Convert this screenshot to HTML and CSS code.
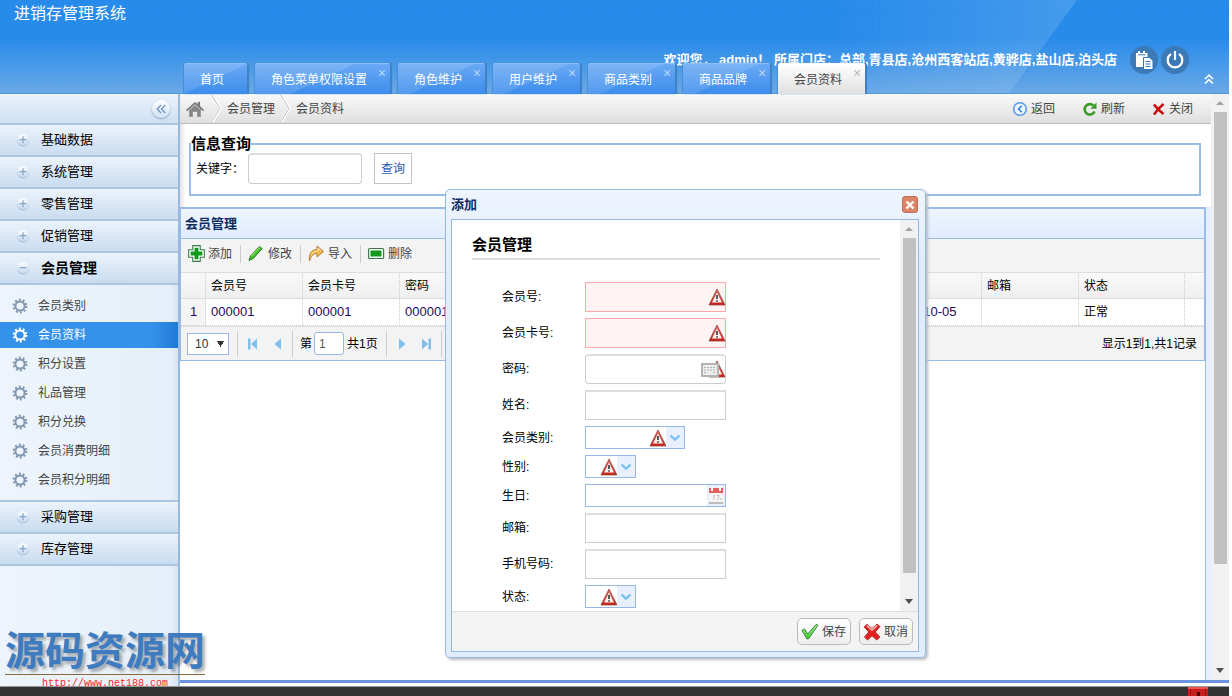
FILE: index.html
```html
<!DOCTYPE html>
<html lang="zh-CN">
<head>
<meta charset="utf-8">
<title>进销存管理系统</title>
<link rel="stylesheet" href="styles.css">
</head>
<body>
<svg class="defs" width="0" height="0">
  <defs>
    <linearGradient id="red" x1="0" x2="0" y1="0" y2="1"><stop offset="0" stop-color="#e8706a"/><stop offset="1" stop-color="#cc1c14"/></linearGradient>
    <linearGradient id="green" x1="0" x2="0" y1="0" y2="1"><stop offset="0" stop-color="#b5f08a"/><stop offset="1" stop-color="#3fc52a"/></linearGradient>
    <linearGradient id="ball" x1="0" x2="0" y1="0" y2="1"><stop offset="0" stop-color="#ffffff"/><stop offset="1" stop-color="#c3d7ee"/></linearGradient>
    <linearGradient id="shine" x1="0" x2="1" y1="0" y2="0"><stop offset="0" stop-color="#fff" stop-opacity="0"/><stop offset="1" stop-color="#fff" stop-opacity=".14"/></linearGradient>
    <symbol id="gear" viewBox="0 0 16 16">
      <circle cx="8" cy="8" r="4.600" fill="none" stroke="currentColor" stroke-width="2"/>
      <circle cx="8" cy="8" r="6.200" fill="none" stroke="currentColor" stroke-width="2.400" stroke-dasharray="1.900 1.996"/>
    </symbol>
    <symbol id="plus" viewBox="0 0 14 14">
      <circle cx="7" cy="7.500" r="6" fill="#a9c2dd"/><circle cx="7" cy="6.700" r="5.800" fill="url(#ball)"/>
      <path d="M7 3.200v7M3.500 6.700h7" stroke="#7fa3c9" stroke-width="1.200"/>
    </symbol>
    <symbol id="minus" viewBox="0 0 14 14">
      <circle cx="7" cy="7.500" r="6" fill="#a9c2dd"/><circle cx="7" cy="6.700" r="5.800" fill="url(#ball)"/>
      <path d="M3.500 6.700h7" stroke="#7fa3c9" stroke-width="1.200"/>
    </symbol>
    <symbol id="warn" viewBox="0 0 18 18">
      <path d="M9 1 17 17H1z" fill="url(#red)" stroke="#8a4a44" stroke-width=".8" stroke-linejoin="round"/>
      <path d="M9 4.500 14 14.600H4z" fill="#f8f2f1"/>
      <path d="M9 7v4M9 12.200v1.600" stroke="#333" stroke-width="1.600"/>
    </symbol>
    <symbol id="down" viewBox="0 0 12 8"><path d="M1.500 1.500 6 5.600l4.500-4.100" fill="none" stroke="#77c0f3" stroke-width="2.300"/></symbol>
    <symbol id="crumb" viewBox="0 0 11 27"><path d="M1 0 9.500 13.500 1 27" fill="none" stroke="#fff" stroke-width="3"/><path d="M.5 0 9 13.500.5 27" fill="none" stroke="#bdbdbd" stroke-width="1"/></symbol>
  </defs>
</svg>

<header class="banner">
  <svg class="shine" viewBox="0 0 240 94" preserveAspectRatio="none"><path d="M0 0H240L172 94H0z" fill="url(#shine)"/></svg>
  <h1 class="brand">进销存管理系统</h1>
  <div class="account">
    <span class="welcome">欢迎您， admin！ 所属门店：总部,青县店,沧州西客站店,黄骅店,盐山店,泊头店</span>
    <button class="round" aria-label="记事"><svg width="20" height="20" viewBox="0 0 20 20"><path d="M2 3h2V1h2v2h3V1h2v2h2.500v4H10v10H2z" fill="#fff"/><path d="M4 4.800h7.500" stroke="#3676b8"/><path d="M9.500 7.500h6l3.500 3v9H9.500z" fill="#fff" stroke="#3676b8"/><path d="M11.500 11.500h5M11.500 14h5M11.500 16.500h5" stroke="#3676b8" stroke-width="1.200"/></svg></button>
    <button class="round" aria-label="退出"><svg width="20" height="20" viewBox="0 0 20 20"><path d="M6 4A7.300 7.300 0 1 0 14 4M10 1v9" fill="none" stroke="#fff" stroke-width="2.200"/></svg></button>
  </div>
  <nav class="tabs">
    <a class="tab" href="#">首页</a>
    <a class="tab" href="#">角色菜单权限设置<i class="tab-x">×</i></a>
    <a class="tab" href="#">角色维护<i class="tab-x">×</i></a>
    <a class="tab" href="#">用户维护<i class="tab-x">×</i></a>
    <a class="tab" href="#">商品类别<i class="tab-x">×</i></a>
    <a class="tab" href="#">商品品牌<i class="tab-x">×</i></a>
    <a class="tab current" href="#">会员资料<i class="tab-x">×</i></a>
  </nav>
  <button class="collapse-top" aria-label="收起"><svg width="10" height="10" viewBox="0 0 10 10"><path d="M1 5 5 1.200 9 5M1 9.500 5 5.700 9 9.500" fill="none" stroke="#fff" stroke-width="1.600"/></svg></button>
</header>

<div class="main">
  <aside class="sidebar">
    <div class="side-top"><button class="fold" aria-label="折叠"><svg width="10" height="10" viewBox="0 0 10 10"><path d="M5 1 1.200 5 5 9M9.300 1 5.500 5 9.300 9" fill="none" stroke="#6f96c2" stroke-width="1.300"/></svg></button></div>
    <a class="group" href="#"><svg width="14" height="14"><use href="#plus"/></svg>基础数据</a>
    <a class="group" href="#"><svg width="14" height="14"><use href="#plus"/></svg>系统管理</a>
    <a class="group" href="#"><svg width="14" height="14"><use href="#plus"/></svg>零售管理</a>
    <a class="group" href="#"><svg width="14" height="14"><use href="#plus"/></svg>促销管理</a>
    <a class="group open" href="#"><svg width="14" height="14"><use href="#minus"/></svg>会员管理</a>
    <nav class="submenu">
      <a class="item" href="#"><svg width="16" height="16"><use href="#gear"/></svg>会员类别</a>
      <a class="item selected" href="#"><svg width="16" height="16"><use href="#gear"/></svg>会员资料</a>
      <a class="item" href="#"><svg width="16" height="16"><use href="#gear"/></svg>积分设置</a>
      <a class="item" href="#"><svg width="16" height="16"><use href="#gear"/></svg>礼品管理</a>
      <a class="item" href="#"><svg width="16" height="16"><use href="#gear"/></svg>积分兑换</a>
      <a class="item" href="#"><svg width="16" height="16"><use href="#gear"/></svg>会员消费明细</a>
      <a class="item" href="#"><svg width="16" height="16"><use href="#gear"/></svg>会员积分明细</a>
    </nav>
    <a class="group" href="#"><svg width="14" height="14"><use href="#plus"/></svg>采购管理</a>
    <a class="group" href="#"><svg width="14" height="14"><use href="#plus"/></svg>库存管理</a>
  </aside>

  <div class="frame">
    <div class="viewport">
      <main class="page">
        <div class="crumbs">
          <svg class="home" width="18" height="18" viewBox="0 0 18 18"><path d="M3 9.500 9 5l6 4.500V17h-4v-5H7v5H3z" fill="#9a9a9a"/><path d="M0 10 9 2l2.500 2.200V2.500L14 1.500V6l4 4-1 1.200-8-7-8 7z" fill="#777"/><path d="M9 6v5M7 8v3M11 8v3M5 10v6M13 10v6" stroke="#666" stroke-width=".8"/></svg>
          <svg width="11" height="27"><use href="#crumb"/></svg>
          <a href="#">会员管理</a>
          <svg width="11" height="27"><use href="#crumb"/></svg>
          <a href="#">会员资料</a>
          <div class="page-tools">
            <button><svg width="16" height="16" viewBox="0 0 16 16"><circle cx="8" cy="8" r="6.300" fill="#eef5fd" stroke="#5b9bea" stroke-width="1.600"/><path d="M9.700 4.800 6.500 8l3.200 3.200" fill="none" stroke="#3f88e4" stroke-width="1.700"/></svg>返回</button>
            <button><svg width="16" height="16" viewBox="0 0 16 16"><path d="M12.600 10.500A5.200 5.200 0 1 1 11.500 4.600" fill="none" stroke="#3a9b25" stroke-width="2.600"/><path d="M14.500 1.500v6.300H8.300z" fill="#3a9b25"/></svg>刷新</button>
            <button><svg width="14" height="14" viewBox="0 0 14 14"><path d="M2 2.500c2 2.500 5 6.500 9.500 9.500M11.500 2C8 5 4.500 8.500 2 12.500" fill="none" stroke="#c80d0d" stroke-width="2.500"/></svg>关闭</button>
          </div>
        </div>

        <div class="query-zone">
          <fieldset class="query">
            <legend>信息查询</legend>
            <label for="kw">关键字：</label>
            <input id="kw" class="box kw" type="text">
            <button class="search">查询</button>
          </fieldset>
        </div>

        <div class="grid-zone">
          <section class="panel">
            <h2 class="panel-title">会员管理</h2>
            <div class="toolbar">
              <button><svg width="17" height="17" viewBox="0 0 16 16"><path d="M4.500.6h7v3.900h3.900v7h-3.900v3.900h-7v-3.900H.6v-7h3.900z" fill="#fff" stroke="#3a7a46" stroke-width="1"/><path d="M8 2.500v11M2.500 8h11" stroke="#109a1c" stroke-width="3.600"/></svg>添加</button>
              <button><svg width="17" height="17" viewBox="0 0 17 17"><path d="M1 15.500 2.500 11 11.500 1.500l2.600 2L5.500 13.300z" fill="#45c02d" stroke="#2a7a1d"/><path d="M3.500 11 12 2.300" stroke="#a9f08e"/></svg>修改</button>
              <button><svg width="17" height="17" viewBox="0 0 17 17"><path d="M1.500 16C.5 9 3.500 4.500 9 4.500V1l6.500 5.500L9 12V8.500C5.500 8.500 3 11 1.500 16z" fill="#f8b94c" stroke="#b97d3d"/><path d="M3 9.500Q5.500 5.500 10 5.600V3.200l3.200 3" fill="none" stroke="#ffe8aa"/></svg>导入</button>
              <button><svg width="17" height="17" viewBox="0 0 17 17"><rect x=".6" y="3.500" width="15" height="10" rx="1" fill="#fff" stroke="#3a7a46" stroke-width="1.200"/><rect x="2.500" y="5.500" width="11" height="6" fill="#109a1c"/></svg>删除</button>
            </div>
            <table class="grid">
              <colgroup><col class="c-no"><col class="c"><col class="c"><col class="c"><col class="c"><col class="c"><col class="c"><col class="c"><col class="c"><col class="c"><col class="c-state"><col></colgroup>
              <thead><tr><th></th><th>会员号</th><th>会员卡号</th><th>密码</th><th></th><th></th><th></th><th></th><th></th><th>邮箱</th><th>状态</th><th></th></tr></thead>
              <tbody><tr><td class="no">1</td><td>000001</td><td>000001</td><td>000001</td><td></td><td></td><td></td><td></td><td>2016-10-05</td><td></td><td>正常</td><td></td></tr></tbody>
            </table>
            <div class="pager">
              <select class="size" aria-label="每页条数"><option>10</option></select>
              <span class="sep"></span>
              <button aria-label="第一页"><svg width="10" height="12" viewBox="0 0 10 12"><path d="M0 .5h2.500v11H0zM9 .5v11L3 6z" fill="#7fbfee"/></svg></button>
              <button aria-label="上一页"><svg width="10" height="12" viewBox="0 0 10 12"><path d="M9 .5v11L2.500 6z" fill="#7fbfee"/></svg></button>
              <span class="sep"></span>
              <label for="pg">第</label><input id="pg" class="pg" type="text" value="1"><span>共1页</span>
              <span class="sep"></span>
              <button aria-label="下一页"><svg width="10" height="12" viewBox="0 0 10 12"><path d="M2 .5v11L8.500 6z" fill="#7fbfee"/></svg></button>
              <button aria-label="最后页"><svg width="10" height="12" viewBox="0 0 10 12"><path d="M7.500.5H10v11H7.500zM1 .5v11L7 6z" fill="#7fbfee"/></svg></button>
              <span class="sep"></span>
              <span class="total">显示1到1,共1记录</span>
            </div>
          </section>
        </div>
      </main>
      <div class="scroll">
        <i class="arrow up"></i><i class="thumb page-thumb"></i><i class="arrow dn"></i>
      </div>
    </div>
  </div>
</div>

<footer class="strip"><svg class="ribbon" width="20" height="10" viewBox="0 0 20 10"><path d="M0 0h20v10H0z" fill="#c81e1e"/><path d="M0 0h20v2H0z" fill="#f05050"/><path d="M2.500 2v8M17.500 2v8" stroke="#801010" stroke-dasharray="2 1"/><path d="M9 5h3v5H9z" fill="#400"/></svg></footer>

<section class="dialog" role="dialog" aria-labelledby="dlg">
  <div class="dialog-head"><h2 id="dlg">添加</h2><button class="dialog-x" aria-label="关闭"><svg width="10" height="10" viewBox="0 0 10 10"><path d="M1.500 1.500l7 7M8.500 1.500l-7 7" stroke="#fff" stroke-width="2.400"/></svg></button></div>
  <div class="dialog-box">
    <div class="dialog-body">
      <form class="form">
        <h3>会员管理</h3>
        <div class="row"><label for="f1">会员号:</label><span class="field"><input id="f1" class="box bad" type="text"><svg class="mark" width="18" height="18"><use href="#warn"/></svg></span></div>
        <div class="row"><label for="f2">会员卡号:</label><span class="field"><input id="f2" class="box bad" type="text"><svg class="mark" width="18" height="18"><use href="#warn"/></svg></span></div>
        <div class="row"><label for="f3">密码:</label><span class="field"><input id="f3" class="box soft" type="password"><svg class="mark" width="18" height="18"><use href="#warn"/></svg><svg class="keys" width="18" height="14" viewBox="0 0 18 14"><path d="M0 0h18v14H0z" fill="#b4b4b4"/><path d="M2 2h14v10H2z" fill="#eee"/><path d="M3 4.500h12M3 7h12M3 9.500h3M12 9.500h3" stroke="#b0b0b0" stroke-dasharray="2 1"/></svg></span></div>
        <div class="row"><label for="f4">姓名:</label><span class="field"><input id="f4" class="box" type="text"></span></div>
        <div class="row"><label for="f5">会员类别:</label><span class="field mid"><select id="f5" class="combo"></select><svg class="mark inner" width="18" height="18"><use href="#warn"/></svg><span class="trigger"><svg width="12" height="8"><use href="#down"/></svg></span></span></div>
        <div class="row"><label for="f6">性别:</label><span class="field short"><select id="f6" class="combo"></select><svg class="mark inner" width="18" height="18"><use href="#warn"/></svg><span class="trigger"><svg width="12" height="8"><use href="#down"/></svg></span></span></div>
        <div class="row"><label for="f7">生日:</label><span class="field"><input id="f7" class="combo" type="text"><span class="trigger"><svg width="14" height="17" viewBox="0 0 14 17"><path d="M0 1h14v15H0z" fill="#f7f4f4"/><path d="M0 1h14v5H0z" fill="#e2605c"/><path d="M3 0v4M11 0v4" stroke="#fff" stroke-width="2"/><path d="M4 8.500l1-.5v5M7.500 8.500H10L8.500 13M11 12h2" fill="none" stroke="#c4bcbc"/><path d="M0 16h14" stroke="#bbb" stroke-width="2"/></svg></span></span></div>
        <div class="row"><label for="f8">邮箱:</label><span class="field"><input id="f8" class="box" type="text"></span></div>
        <div class="row"><label for="f9">手机号码:</label><span class="field"><input id="f9" class="box" type="text"></span></div>
        <div class="row"><label for="f10">状态:</label><span class="field short"><select id="f10" class="combo"></select><svg class="mark inner" width="18" height="18"><use href="#warn"/></svg><span class="trigger"><svg width="12" height="8"><use href="#down"/></svg></span></span></div>
      </form>
      <div class="scroll"><i class="arrow up"></i><i class="thumb form-thumb"></i><i class="arrow dn"></i></div>
    </div>
    <div class="dialog-foot">
      <button class="act"><svg width="18" height="18" viewBox="0 0 18 18"><path d="M1 7.500 3.500 6l3.300 5L15 1.500l2 .7-9.500 13.600-1.500.2z" fill="url(#green)" stroke="#2b8a3c"/></svg>保存</button>
      <button class="act"><svg width="18" height="18" viewBox="0 0 18 18"><path d="M4 1.200 9 5.500l5-4.300 3 2.300L12.300 9l4.500 5-3 3L9 12.800 4.500 17l-3-3L5.800 9 1.200 4z" fill="#e3221f" stroke="#b12a28"/><path d="M4 2.500 9 7l5-4.500" fill="none" stroke="#f7aaa6" stroke-width="1.800"/></svg>取消</button>
    </div>
  </div>
</section>

<div class="watermark"><strong>源码资源网</strong><span>http://www.net188.com</span></div>
</body>
</html>
```
FILE: styles.css
```css
* { box-sizing: border-box; }
body {
  margin: 0;
  padding-right: 3px;
  height: 100vh;
  display: flex;
  flex-direction: column;
  position: relative;
  overflow: hidden;
  background: #fff;
  font: 12px/16px "Liberation Sans", "Noto Sans CJK SC", sans-serif;
  color: #000;
}
h1, h2, h3 { margin: 0; }
a { color: inherit; text-decoration: none; }
button { border: 0; padding: 0; background: none; font: inherit; color: inherit; display: flex; align-items: center; }
input, select { font: inherit; margin: 0; }
svg { display: block; flex: none; }
.defs { position: absolute; }

/* banner */
.banner {
  flex: none;
  height: 94px;
  display: grid;
  grid-template: 94px / 1fr;
  background:
    radial-gradient(circle, rgba(255,255,255,.06) 1px, transparent 1px) 0 0 / 3px 3px,
    linear-gradient(#268aea 0, #268aea 38px, #68a8e6 93px, #4288cc 94px);
}
.banner > * { grid-area: 1 / 1; }
.shine { justify-self: end; width: 240px; height: 93px; margin-right: 152px; }
.brand { margin: 4px 0 0 14px; font-size: 16px; line-height: 20px; font-weight: 400; color: #fff; }
.account { justify-self: end; align-self: start; display: flex; gap: 3px; align-items: center; margin: 46px 40px 0 0; }
.welcome { font-size: 13px; font-weight: 700; color: #fff; margin-right: 10px; white-space: nowrap; }
.round { width: 28px; height: 28px; border-radius: 14px; justify-content: center; background: #3c79b7; }
.collapse-top { align-self: end; justify-self: end; margin: 0 15px 10px 0; }
.tabs { align-self: end; justify-self: start; display: flex; gap: 8px; margin-left: 184px; }
.tab {
  position: relative;
  height: 31px;
  padding: 0 23px 0 16px;
  line-height: 32px;
  color: #fff;
  background: linear-gradient(155deg, rgba(255,255,255,.12) 50%, transparent 50%), linear-gradient(#69a9f5, #3c8dec);
  border-top: 1px solid #8fbff8;
  border-radius: 2px 2px 0 0;
  box-shadow: 2px 0 1px #3f80c2, -1px 0 1px #4a8dd3;
}
.tab-x { position: absolute; top: 1px; right: 4px; font: 14px/16px "Liberation Sans", sans-serif; color: #b9d7fa; }
.tab.current { color: #444; background: linear-gradient(#fff, #e0e0e0); border-color: #fff; }
.current .tab-x { color: #bbb; }

/* frame */
.main { flex: 1; min-height: 0; display: flex; }
.sidebar { flex: none; width: 180px; border-right: 2px solid #99b9e0; background: linear-gradient(90deg, #edf4fc, #e6eff9 96%, #d6e4f3); }
.side-top {
  height: 31px; padding-right: 8px; display: flex; justify-content: flex-end; align-items: center;
  background: linear-gradient(#ebf3fb, #cfe0f2); border-bottom: 2px solid #adc6e0;
}
.fold { width: 18px; height: 18px; border-radius: 9px; justify-content: center; background: linear-gradient(#fff, #cfe0f2); box-shadow: 0 1px 2px #7f9fc4; }
.group {
  height: 32px; padding-left: 16px; display: flex; align-items: center; gap: 11px;
  font-size: 13px; line-height: 30px;
  background: linear-gradient(#ebf3fb, #c8dcf0); border-bottom: 2px solid #adc6e0;
}
.group.open { font-size: 14px; font-weight: 700; }
.submenu { padding: 8px 0 7px; display: flex; flex-direction: column; gap: 3px; color: #444; border-bottom: 2px solid #adc6e0; }
.item { height: 26px; padding-left: 12px; display: flex; align-items: center; gap: 10px; }
.item svg { color: #8299b0; }
.item.selected { color: #fff; background: linear-gradient(90deg, #3592ea 85%, #1f7ad6); }
.item.selected svg { color: #fff; }
.frame { flex: 1; min-width: 0; display: flex; flex-direction: column; border-bottom: 3px solid #fff; }
.viewport { flex: 1; min-height: 0; display: flex; border-bottom: 3px solid #6b93df; }
.page { flex: 1; min-width: 0; display: flex; flex-direction: column; }
.scroll { flex: none; width: 18px; background: #f1f1f1; display: flex; flex-direction: column; align-items: center; padding: 7px 0; }
.arrow { border: 4px solid transparent; }
.arrow.up { border-top: 0; border-bottom: 4px solid #a3a3a3; }
.arrow.dn { border-bottom: 0; border-top: 5px solid #505050; margin-top: auto; }
.thumb { width: 13px; margin-top: 7px; background: #c1c1c1; }
.page-thumb { height: 79%; }
.form-thumb { height: 335px; }
.strip { flex: none; height: 10px; background: #333; border-top: 1px solid #999; display: flex; justify-content: flex-end; padding-right: 21px; }

/* page */
.crumbs {
  height: 30px; padding: 0 18px 0 6px; display: flex; align-items: center; gap: 5px;
  color: #444; background: linear-gradient(#f9f9f9, #dfdfdf); border-bottom: 1px solid #bbb;
}
.home { margin-right: 2px; }
.page-tools { margin-left: auto; display: flex; gap: 27px; }
.page-tools button { gap: 3px; }
.query-zone { height: 83px; padding: 11px 10px 0 9px; background: linear-gradient(90deg, #e4e4e4, #fff 6px); }
.query { margin: 0; padding: 0 0 10px 5px; height: 61px; border: 2px solid #99bbe8; display: flex; align-items: flex-start; }
.query legend { padding: 0; margin-left: -5px; font-size: 15px; line-height: 18px; font-weight: 700; }
.query label { line-height: 32px; width: 52px; white-space: nowrap; }
.box { height: 30px; width: 100%; border: 1px solid #ccc; border-top: 2px solid #ddd; background: #fff; padding: 0 6px; }
.kw { width: 114px; height: 31px; border-radius: 4px; }
.search { height: 31px; margin-left: 12px; padding: 0 6px; border: 1px solid #c4c4c4; color: #2758b0; background: #fff; }
.grid-zone { flex: 1; padding-right: 1px; border-right: 5px solid #e6effb; background: linear-gradient(#99bbe8, #99bbe8) right / 1px 100% no-repeat; }
.panel { border: solid #99bbe8; border-width: 2px 1px 1px 1px; background: #f3f3f3; }
.panel-title {
  height: 30px; padding-left: 4px; font-size: 13px; line-height: 30px; color: #0e2d5f;
  background: linear-gradient(#eff5ff, #e0ecff); border-bottom: 1px solid #99bbe8;
}
.toolbar { height: 33px; padding: 0 7px 4px; display: flex; align-items: center; color: #444; }
.toolbar button { height: 18px; gap: 3px; padding-right: 8px; margin-right: 7px; border-right: 1px solid #ccc; }
.toolbar button:last-child { border: 0; }
.grid { width: 100%; table-layout: fixed; border-collapse: separate; border-spacing: 0; }
.c-no { width: 25px; }
.c { width: 97px; }
.c-state { width: 106px; }
.grid th, .grid td { height: 27px; padding: 0 4px 0 5px; text-align: left; white-space: nowrap; border-right: 1px dotted #ccc; }
.grid th:last-child, .grid td:last-child { border-right: 0; }
.grid th { font-weight: 400; background: linear-gradient(#f9f9f9, #efefef); border-top: 1px solid #ddd; border-bottom: 1px solid #ddd; }
.grid td { font-size: 13px; background: #fff; border-bottom: 1px dotted #ccc; }
.grid td:nth-child(11) { font-size: 12px; }
.grid .no { background: #f4f4f4; text-align: center; }
.grid td:nth-child(-n+4), .grid td:nth-child(9) { color: #1c0a5c; }
.pager { height: 34px; border-top: 1px solid #ddd; padding: 0 7px 0 6px; display: flex; align-items: center; }
.size {
  width: 42px; height: 22px; padding: 0 1px 0 7px; border: 1px solid #95b8e7; color: #333; appearance: none;
  background: conic-gradient(from -30deg at 50% 100%, #333 0 60deg, transparent 0) 29px 7px / 7px 6px no-repeat, #fff;
}
.sep { width: 1px; height: 26px; background: #ccc; margin: 0 7px 0 8px; }
.pager button { width: 10px; margin: 0 2px 0 3px; }
.pager button + button { margin-left: 12px; }
.pg { width: 30px; height: 23px; margin: 0 3px 0 2px; padding: 0 4px; border: 1px solid #95b8e7; border-radius: 3px; color: #555; }
.total { margin-left: auto; }

/* dialog */
.dialog {
  position: absolute; left: 445px; top: 189px; width: 481px; padding: 0 6px 5px 5px;
  border: 1px solid #95b8e7; border-radius: 5px; background: linear-gradient(#eff5ff, #e0ecff 70px);
  box-shadow: 2px 2px 3px #bbb;
}
.dialog-head { height: 29px; display: flex; align-items: center; justify-content: space-between; }
.dialog-head h2 { font-size: 13px; color: #0e2d5f; }
.dialog-x { width: 16px; height: 17px; border-radius: 3px; justify-content: center; background: #dc8468; border: 1px solid #c06c54; margin-right: 1px; }
.dialog-box { border: 1px solid #95b8e7; background: #fff; }
.dialog-body { height: 391px; display: flex; }
.form { flex: 1; padding: 16px 20px 0; display: flex; flex-direction: column; gap: 6px; }
.form h3 { font-size: 15px; line-height: 18px; height: 24px; border-bottom: 2px solid #ddd; margin-bottom: 16px; }
.row { display: flex; align-items: center; padding-left: 30px; }
.row > label { width: 83px; }
.field { position: relative; width: 141px; display: flex; }
.field.mid { width: 100px; }
.field.short { width: 51px; }
.bad { border: 1px solid #ffa8a8; background: #fff3f3; }
.soft { border-radius: 4px; }
.combo { appearance: none; width: 100%; height: 23px; border: 1px solid #95b8e7; background: #fff; padding: 0 20px 0 4px; }
.mark { position: absolute; right: 0; top: 6px; }
.mark.inner { right: 18px; top: 3px; }
.keys { position: absolute; right: 7px; top: 9px; }
.trigger { position: absolute; right: 1px; top: 1px; bottom: 1px; width: 18px; display: flex; align-items: center; justify-content: center; background: #e8f0ff; pointer-events: none; }
.dialog-foot { height: 40px; padding: 0 5px; display: flex; justify-content: flex-end; align-items: center; gap: 8px; background: #f3f3f3; border-top: 1px solid #ddd; }
.act { height: 27px; padding: 0 4px 0 3px; gap: 3px; border: 1px solid #bbb; border-radius: 5px; color: #444; background: linear-gradient(#fff, #ededed); }

/* watermark */
.watermark { position: absolute; left: 5px; bottom: 6px; width: 200px; display: flex; flex-direction: column; align-items: center; gap: 3px; pointer-events: none; }
.watermark strong { width: 100%; height: 47px; font: 700 40px/40px "Noto Sans CJK SC", sans-serif; color: #3e7bbf; text-shadow: 3px 3px 3px rgba(0,0,0,.3); border-bottom: 1px solid #8d6a3c; white-space: nowrap; }
.watermark span { font: 10px/12px "Liberation Mono", monospace; color: #f22; }
```
